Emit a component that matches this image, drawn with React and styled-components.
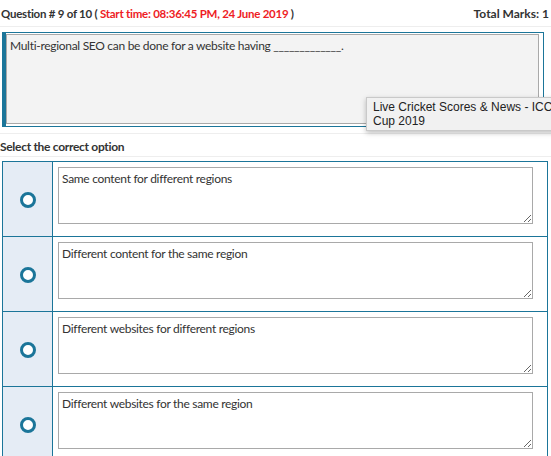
import React from 'react'
import styled, { createGlobalStyle } from 'styled-components';

const GlobalStyle = createGlobalStyle`
body {
  margin: 0;
  background: #ffffff;
  font-family: Lato, 'Liberation Sans', sans-serif;
  overflow: hidden;
}
`
const Page = styled.div`
position: relative;
width: 551px;
height: 456px;
overflow: hidden;
`
const Header = styled.div`
display: flex;
justify-content: space-between;
align-items: center;
height: 27px;
padding: 0 2px 0 1px;
border-bottom: 1px solid #eeeeee;
box-sizing: border-box;
font-size: 11.5px;
letter-spacing: -0.25px;
font-weight: 700;
color: #333333;
`
const Red = styled.span`
color: #ee1c25;
`
const Marks = styled.span`
letter-spacing: 0;
font-size: 12px;
`
const QuestionBox = styled.div`
margin: 5px 0 0 2px;
width: 542px;
border: 1px solid #1b7599;
border-left: 4px solid #1b7599;
padding: 1px 4px 2px 0;
box-sizing: border-box;
`
const Area = styled.textarea`
display: block;
box-sizing: border-box;
width: 100%;
height: ${p => p.$h}px;
margin: 0;
padding: 3px 3px;
border: 1px solid #a9a9a9;
border-radius: 0;
background: ${p => p.$bg || '#ffffff'};
font-family: Lato, 'Liberation Sans', sans-serif;
font-size: 12px;
letter-spacing: -0.3px;
line-height: 15px;
color: #333333;
outline: none;
`
const Divider = styled.div`
margin-top: 6px;
border-top: 1px solid #eeeeee;
`
const Label = styled.div`
height: 23px;
display: flex;
align-items: center;
padding-top: 3px;
font-size: 12px;
letter-spacing: -0.3px;
font-weight: 700;
color: #333333;
border-bottom: 1px solid #eeeeee;
box-sizing: border-box;
`
const Options = styled.div`
margin: 4px 0 0 2px;
width: 546px;
border: 1px solid #1b7599;
border-bottom: none;
box-sizing: border-box;
`
const Row = styled.div`
display: grid;
grid-template-columns: 50px 1fr;
height: 74px;
border-bottom: 1px solid #1b7599;
`
const RadioCell = styled.div`
background: #e5ecf5;
border-right: 1px solid #1b7599;
display: flex;
align-items: center;
justify-content: center;
`
const Radio = styled.span`
width: 10px;
height: 10px;
border-radius: 50%;
border: 3px solid #1b7599;
background: #ffffff;
margin-top: 1px;
`
const AnswerCell = styled.div`
padding: 5px 14px 0 5px;
`
const Tooltip = styled.div`
position: absolute;
left: 366px;
top: 97px;
width: 200px;
padding: 2px 6px 2px 6px;
background: #f1f1f1;
border: 1px solid #c9c9c9;
box-shadow: 0 2px 5px rgba(0, 0, 0, 0.25);
font-family: 'Liberation Sans', Arial, sans-serif;
font-size: 12px;
line-height: 14px;
color: #222222;
white-space: pre;
`

const options = [
  'Same content for different regions',
  'Different content for the same region',
  'Different websites for different regions',
  'Different websites for the same region',
]

const App = () => {
  return (
    <Page>
      <GlobalStyle />
      <Header>
        <span>
          Question # 9 of 10 ( <Red>Start time: 08:36:45 PM, 24 June 2019</Red> )
        </span>
        <Marks>Total Marks: 1</Marks>
      </Header>
      <QuestionBox>
        <Area $h={90} $bg="#f3f3f3" readOnly
          defaultValue="Multi-regional SEO can be done for a website having _____________." />
      </QuestionBox>
      <Divider />
      <Label>Select the correct option</Label>
      <Options>
        {options.map(text => (
          <Row key={text}>
            <RadioCell>
              <Radio />
            </RadioCell>
            <AnswerCell>
              <Area $h={57} readOnly defaultValue={text} />
            </AnswerCell>
          </Row>
        ))}
      </Options>
      <Tooltip>{'Live Cricket Scores & News - ICC Cricket\nCup 2019'}</Tooltip>
    </Page>
  )
}

export default App
